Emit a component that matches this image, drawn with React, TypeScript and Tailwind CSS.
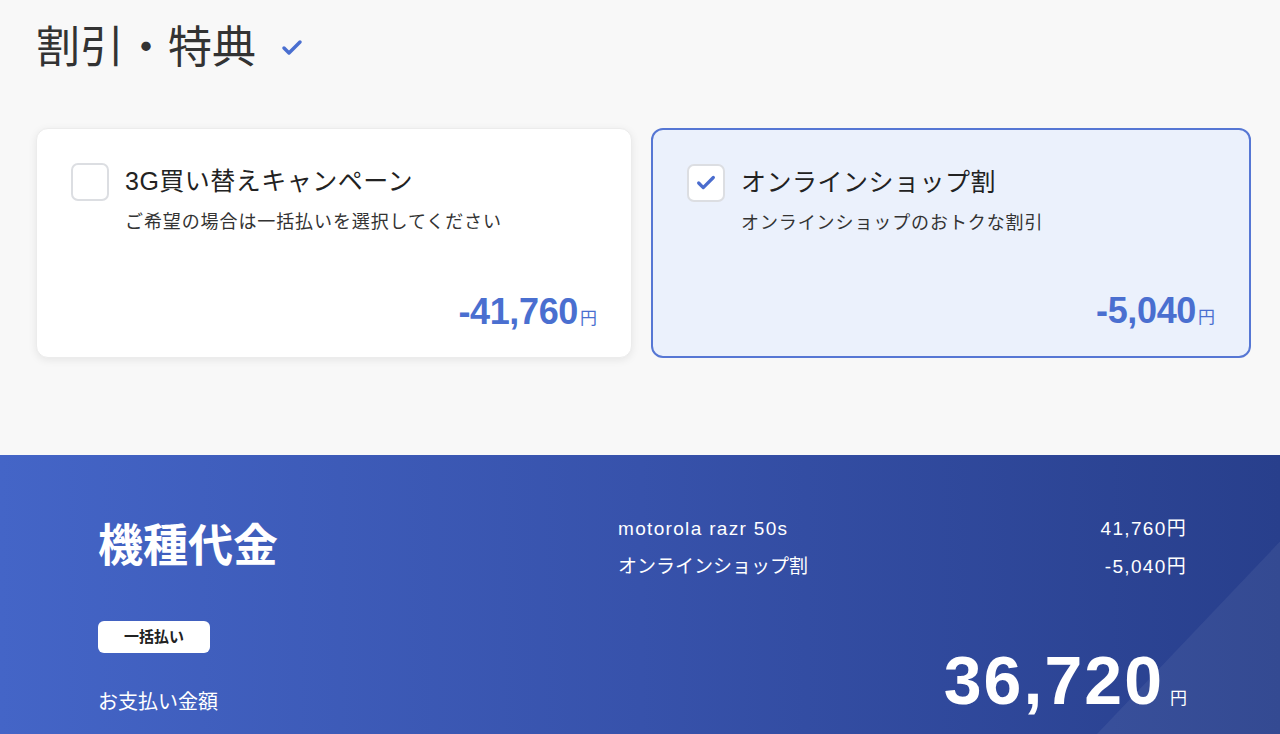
import { Check } from 'lucide-react';

const jp = "font-['Liberation_Sans','Noto_Sans_CJK_JP',sans-serif]";

interface OfferProps {
  title: string;
  note: string;
  amount: string;
  checked?: boolean;
}

function OfferCard({ title, note, amount, checked }: OfferProps) {
  return (
    <div
      className={`flex flex-col h-[230px] rounded-[12px] px-[34px] pt-[34px] pb-[18px] ${
        checked
          ? 'bg-[#ebf1fc] border-2 border-[#5677d4]'
          : 'bg-white border border-[#ececec] shadow-[0_2px_8px_rgba(0,0,0,0.08)]'
      }`}
    >
      <div className="flex items-center gap-[16px]">
        <span className="w-[38px] h-[38px] shrink-0 rounded-[7px] border-2 border-[#dcdee2] bg-white flex items-center justify-center">
          {checked && <Check size={22} strokeWidth={3.5} className="text-[#4a6cce]" />}
        </span>
        <p className="text-[25px] text-[#222] tracking-[0.02em]">{title}</p>
      </div>
      <p className="pl-[54px] mt-[8px] text-[18px] tracking-[0.05em] text-[#333]">{note}</p>
      <div className="mt-auto flex justify-end items-baseline text-[#4a6fd0]">
        <span className="text-[36px] font-bold tracking-[-0.01em]">{amount}</span>
        <span className="text-[17px] ml-[2px]">円</span>
      </div>
    </div>
  );
}

function Row({ label, value, latinLabel }: { label: string; value: string; latinLabel?: boolean }) {
  return (
    <div className="flex justify-between text-[19px] leading-[28px]">
      <span className={latinLabel ? 'tracking-[0.07em]' : ''}>{label}</span>
      <span className="tracking-[0.07em]">{value}</span>
    </div>
  );
}

export default function App() {
  return (
    <div className={`w-[1280px] h-[734px] overflow-hidden bg-[#f8f8f8] ${jp}`}>
      {/* Discounts */}
      <section className="h-[455px] px-[36px] pt-[20px]">
        <h2 className="flex items-center gap-[24px] text-[44px] leading-[56px] text-[#333]">
          割引・特典
          <Check size={24} strokeWidth={3.5} className="text-[#4a6fd0]" />
        </h2>
        <div className="grid grid-cols-[596px_600px] gap-[19px] mt-[52px]">
          <OfferCard
            title="3G買い替えキャンペーン"
            note="ご希望の場合は一括払いを選択してください"
            amount="-41,760"
          />
          <OfferCard
            title="オンラインショップ割"
            note="オンラインショップのおトクな割引"
            amount="-5,040"
            checked
          />
        </div>
      </section>

      {/* Device price */}
      <section className="relative h-[279px] bg-gradient-to-r from-[#4465c7] via-[#3752ab] to-[#283f8c] text-white">
        <div className="absolute inset-0 bg-white/[0.06] [clip-path:polygon(100%_31%,100%_100%,85.7%_100%)] pointer-events-none" />
        <div className="relative flex h-full pl-[98px] pr-[93px]">
          <div className="w-[520px] pt-[64px] flex flex-col">
            <h3 className="text-[45px] leading-[56px] font-bold">機種代金</h3>
            <span className="mt-[46px] w-[112px] h-[32px] rounded-[6px] bg-white text-[#222] text-[15px] font-bold flex items-center justify-center">
              一括払い
            </span>
            <p className="mt-[34px] text-[20px]">お支払い金額</p>
          </div>
          <div className="flex-1 pt-[60px] flex flex-col">
            <Row label="motorola razr 50s" value="41,760円" latinLabel />
            <div className="mt-[10px]">
              <Row label="オンラインショップ割" value="-5,040円" />
            </div>
            <div className="mt-auto mb-[20px] flex justify-end items-baseline">
              <span className="text-[68px] leading-none font-bold tracking-[0.03em]">36,720</span>
              <span className="text-[17px] ml-[6px]">円</span>
            </div>
          </div>
        </div>
      </section>
    </div>
  );
}
